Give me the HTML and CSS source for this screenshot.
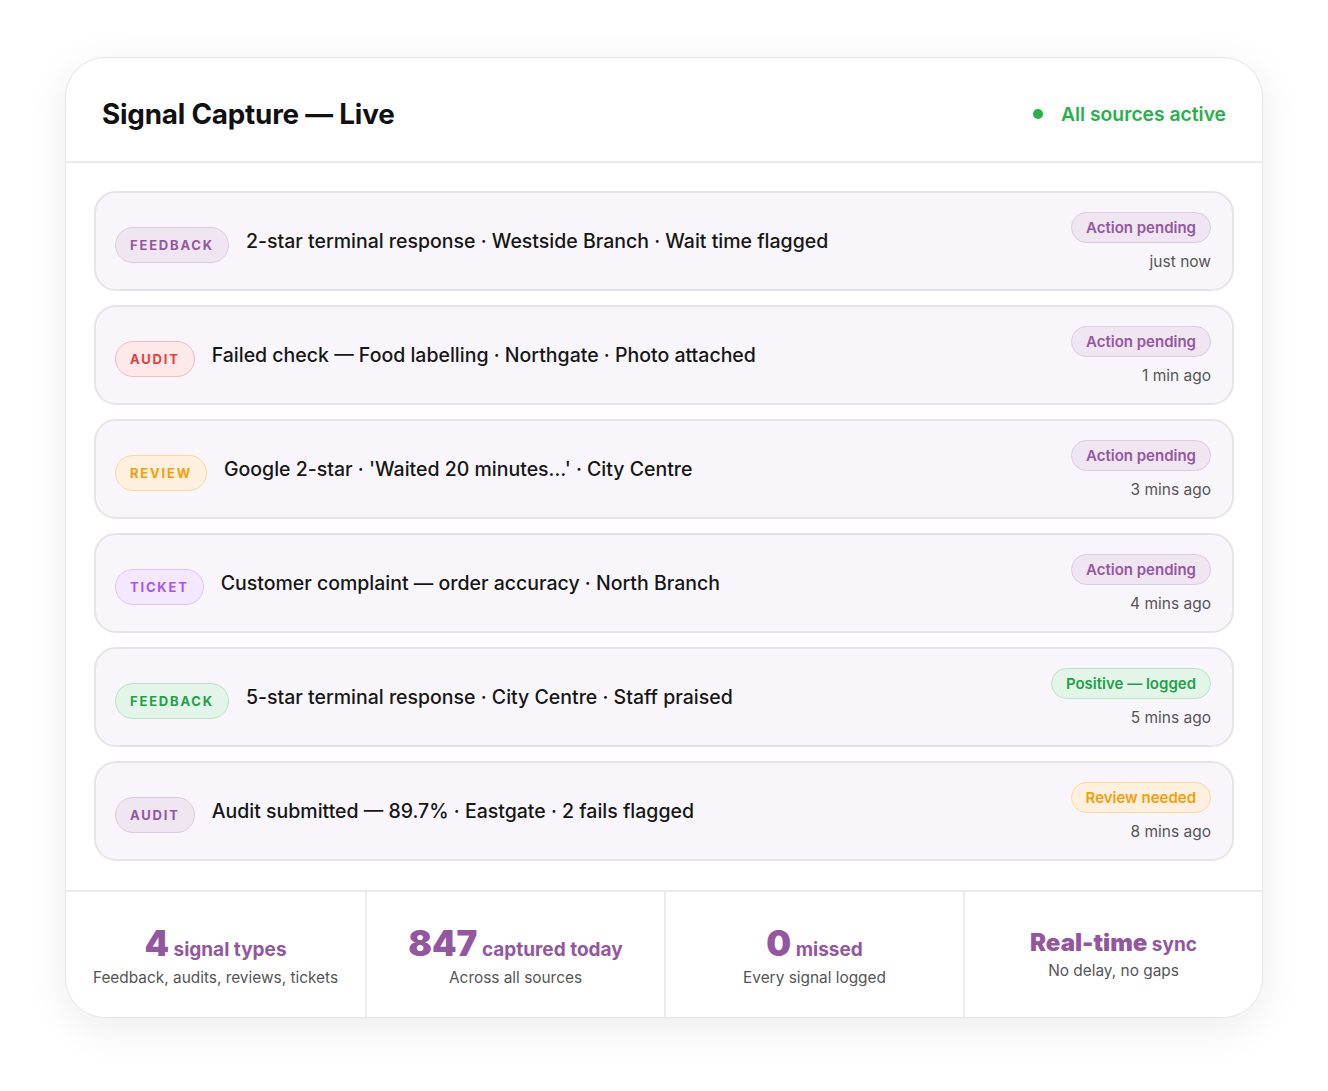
FILE: index.html
```html
<!DOCTYPE html>
<html lang="en">

<head>
  <meta charset="UTF-8" />
  <meta name="viewport" content="width=device-width, initial-scale=1.0" />
  <title>Signal Capture</title>
  <link rel="stylesheet" href="styles.css">
</head>

<body>
  <div class="capture">
    <div class="capture-head">
      <h1 class="title">Signal Capture — Live</h1>
      <p class="status"><i class="dot"></i>All sources active</p>
    </div>

    <ul class="signals">
      <li class="signal">
        <span class="tag tag-purple">Feedback</span>
        <p class="signal-text">2-star terminal response · Westside Branch · Wait time flagged</p>
        <div class="signal-meta">
          <span class="pill pill-purple">Action pending</span>
          <span class="time">just now</span>
        </div>
      </li>
      <li class="signal">
        <span class="tag tag-red">Audit</span>
        <p class="signal-text">Failed check — Food labelling · Northgate · Photo attached</p>
        <div class="signal-meta">
          <span class="pill pill-purple">Action pending</span>
          <span class="time">1 min ago</span>
        </div>
      </li>
      <li class="signal">
        <span class="tag tag-orange">Review</span>
        <p class="signal-text">Google 2-star · 'Waited 20 minutes…' · City Centre</p>
        <div class="signal-meta">
          <span class="pill pill-purple">Action pending</span>
          <span class="time">3 mins ago</span>
        </div>
      </li>
      <li class="signal">
        <span class="tag tag-violet">Ticket</span>
        <p class="signal-text">Customer complaint — order accuracy · North Branch</p>
        <div class="signal-meta">
          <span class="pill pill-purple">Action pending</span>
          <span class="time">4 mins ago</span>
        </div>
      </li>
      <li class="signal">
        <span class="tag tag-green">Feedback</span>
        <p class="signal-text">5-star terminal response · City Centre · Staff praised</p>
        <div class="signal-meta">
          <span class="pill pill-green">Positive — logged</span>
          <span class="time">5 mins ago</span>
        </div>
      </li>
      <li class="signal">
        <span class="tag tag-purple">Audit</span>
        <p class="signal-text">Audit submitted — 89.7% · Eastgate · 2 fails flagged</p>
        <div class="signal-meta">
          <span class="pill pill-orange">Review needed</span>
          <span class="time">8 mins ago</span>
        </div>
      </li>
    </ul>

    <div class="stats">
      <div class="stat">
        <p class="stat-value"><b>4</b> signal types</p>
        <p class="stat-label">Feedback, audits, reviews, tickets</p>
      </div>
      <div class="stat">
        <p class="stat-value"><b>847</b> captured today</p>
        <p class="stat-label">Across all sources</p>
      </div>
      <div class="stat">
        <p class="stat-value"><b>0</b> missed</p>
        <p class="stat-label">Every signal logged</p>
      </div>
      <div class="stat">
        <p class="stat-value"><b class="small">Real-time</b> sync</p>
        <p class="stat-label">No delay, no gaps</p>
      </div>
    </div>
  </div>
</body>

</html>
```

FILE: styles.css
```css
* {
  box-sizing: border-box;
}

body {
  margin: 0;
  padding: 57px 65px;
  background-color: #fff;
  font-family: Inter, "Open Sans", sans-serif;
  color: #1a1a1a;
}

p,
h1,
ul {
  margin: 0;
  padding: 0;
}

.capture {
  width: 1198px;
  border: 1px solid #e6e6e6;
  border-radius: 40px;
  background-color: #fff;
  box-shadow: 0 10px 40px rgba(0, 0, 0, 0.08);
  overflow: hidden;
}

/* header */
.capture-head {
  display: flex;
  align-items: center;
  justify-content: space-between;
  height: 105px;
  padding: 8px 36px 0;
  border-bottom: 2px solid #ebebeb;
}

.capture-head .title {
  font-size: 27.8px;
  font-weight: 700;
  color: #111;
  letter-spacing: -0.2px;
}

.capture-head .status {
  display: flex;
  align-items: center;
  font-size: 19.3px;
  font-weight: 600;
  color: #25b24a;
}

.capture-head .dot {
  width: 10px;
  height: 10px;
  margin-right: 18px;
  border-radius: 50%;
  background-color: #25b24a;
}

/* signal rows */
.signals {
  list-style: none;
  display: flex;
  flex-direction: column;
  gap: 14px;
  padding: 28px 28px 29px;
}

.signal {
  display: flex;
  align-items: center;
  height: 100px;
  padding: 0 21px 0 19px;
  border: 2px solid #e6e4e8;
  border-radius: 22px;
  background-color: #f8f6fa;
}

.tag {
  margin-top: 8px;
  padding: 0 14px;
  height: 36px;
  line-height: 34px;
  border: 1px solid;
  border-radius: 18px;
  font-size: 13px;
  font-weight: 700;
  letter-spacing: 1.8px;
  text-transform: uppercase;
}

.signal-text {
  flex: 1;
  margin-left: 17px;
  font-size: 19.5px;
  font-weight: 500;
  color: #161616;
}

.signal-meta {
  display: flex;
  flex-direction: column;
  align-items: flex-end;
  gap: 9px;
}

.pill {
  height: 31px;
  line-height: 29px;
  padding: 0 14px;
  border: 1px solid;
  border-radius: 16px;
  font-size: 15px;
  font-weight: 600;
}

.time {
  font-size: 15.5px;
  color: #555;
}

.tag-purple,
.pill-purple {
  color: #93579f;
  background-color: #efe6f2;
  border-color: #dccbe2;
}

.tag-red {
  color: #e53e3e;
  background-color: #fde9e9;
  border-color: #f6b9b9;
}

.tag-orange,
.pill-orange {
  color: #f59e0b;
  background-color: #fdf0df;
  border-color: #fbd9a0;
}

.tag-violet {
  color: #a855f7;
  background-color: #f3e8ff;
  border-color: #dfc3fb;
}

.tag-green,
.pill-green {
  color: #22a04a;
  background-color: #e3f5e8;
  border-color: #b7e4c4;
}

/* footer stats */
.stats {
  display: grid;
  grid-template-columns: repeat(4, 1fr);
  height: 127px;
  border-top: 2px solid #ebebeb;
}

.stat {
  display: flex;
  flex-direction: column;
  align-items: center;
  justify-content: center;
  border-left: 2px solid #ebebeb;
}

.stat:first-child {
  border-left: 0;
}

.stat-value {
  font-size: 19px;
  font-weight: 700;
  color: #93579f;
  line-height: 1.2;
}

.stat-value b {
  font-size: 35px;
}

.stat-value b.small {
  font-size: 24px;
}

.stat-label {
  margin-top: 4px;
  font-size: 15.4px;
  color: #555;
}
```
